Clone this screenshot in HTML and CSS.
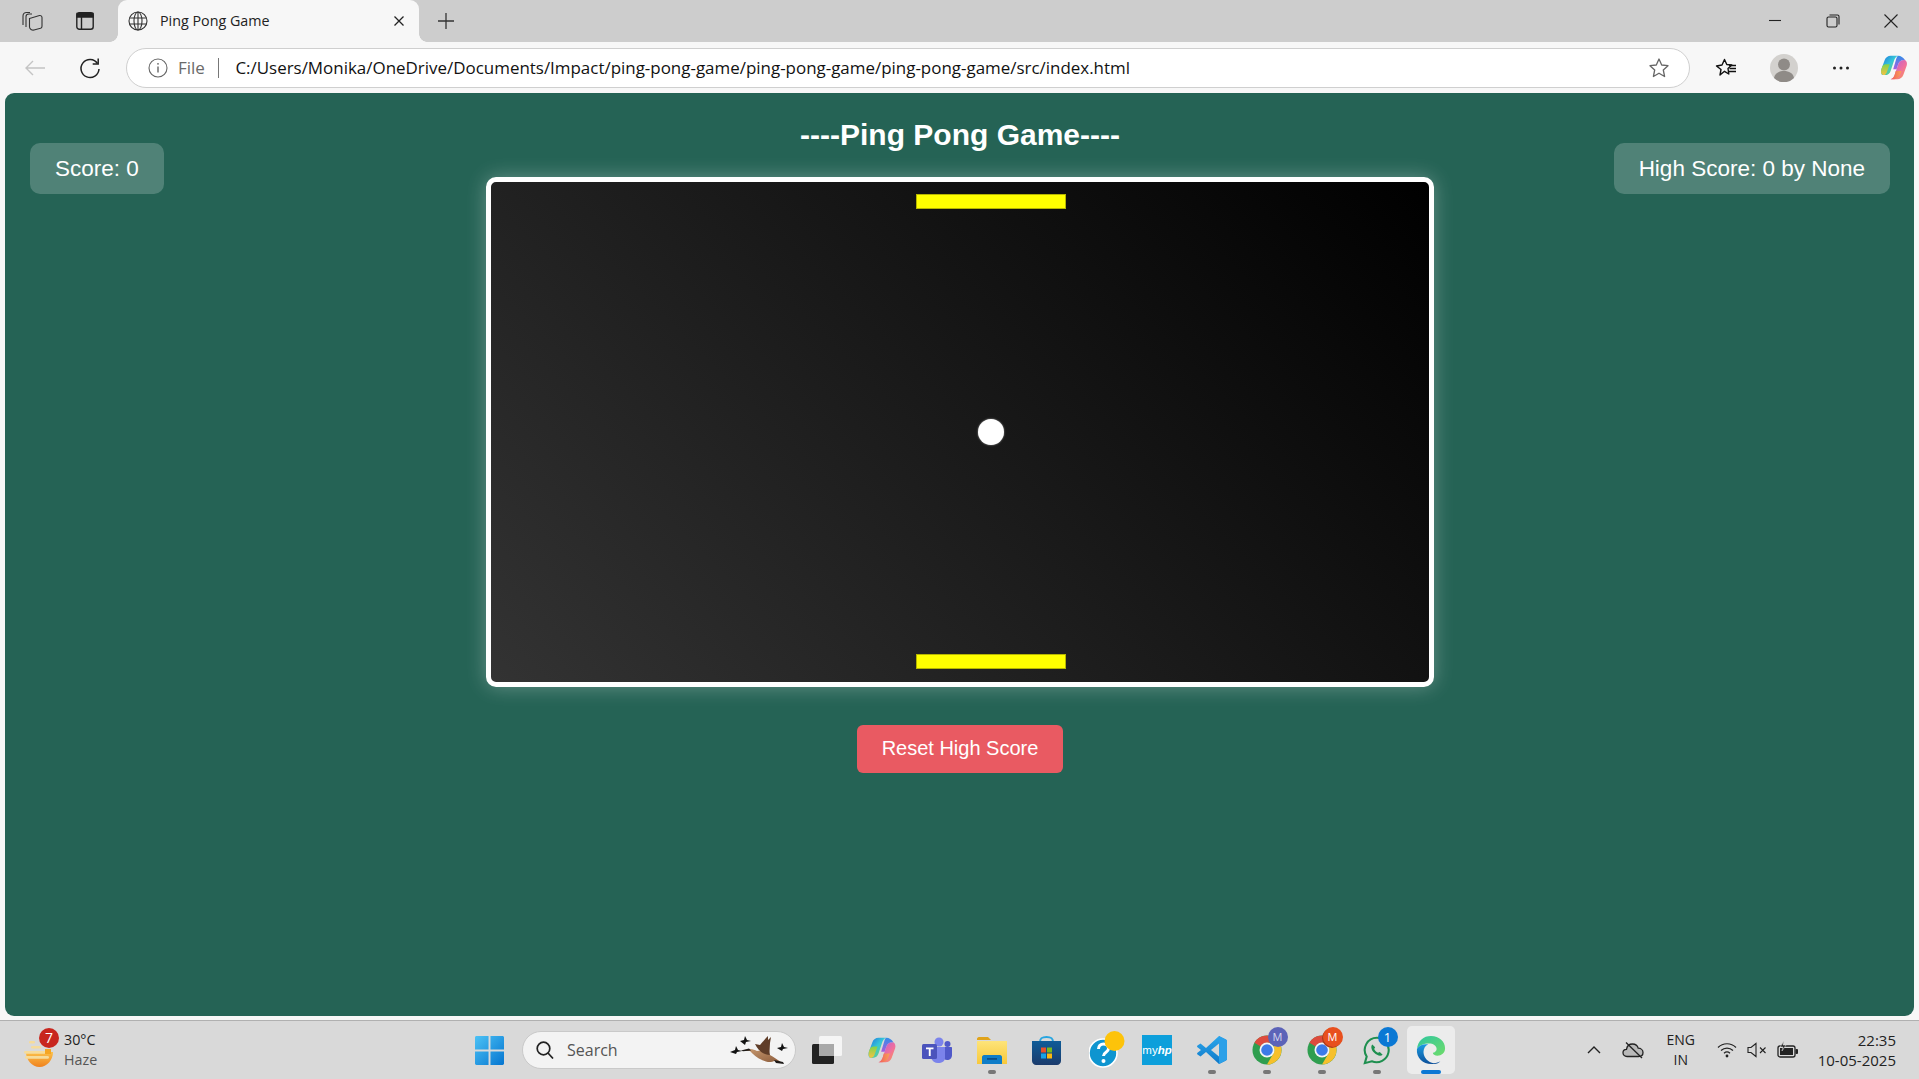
FILE: index.html
```html
<!DOCTYPE html>
<html lang="en">
<head>
<meta charset="utf-8">
<title>Ping Pong Game</title>
<link rel="stylesheet" href="styles.css">
</head>
<body>
<svg class="defs" width="0" height="0" aria-hidden="true">
  <defs>
    <linearGradient id="cpA" x1="0" y1="0" x2="1" y2="1"><stop offset="0" stop-color="#1b6ee0"/><stop offset=".45" stop-color="#35c6d8"/><stop offset="1" stop-color="#8bd63f"/></linearGradient>
    <linearGradient id="cpB" x1="0" y1="0" x2="1" y2="1"><stop offset="0" stop-color="#b25ae0"/><stop offset=".6" stop-color="#f2719a"/><stop offset="1" stop-color="#f9a03f"/></linearGradient>
    <linearGradient id="cpC" x1="0" y1="0" x2="0" y2="1"><stop offset="0" stop-color="#7fd34a"/><stop offset="1" stop-color="#f6c343"/></linearGradient>
    <linearGradient id="cpD" x1="0" y1="0" x2="1" y2="0"><stop offset="0" stop-color="#f05a5a"/><stop offset="1" stop-color="#f9a25a"/></linearGradient>
    <linearGradient id="cpE" x1="0" y1="0" x2="0" y2="1"><stop offset="0" stop-color="#2f8fe8"/><stop offset="1" stop-color="#a85ce0"/></linearGradient>
    <linearGradient id="winG" x1="0" y1="0" x2="1" y2="1"><stop offset="0" stop-color="#4cc2f5"/><stop offset="1" stop-color="#0575d0"/></linearGradient>
    <linearGradient id="edgeA" x1="0" y1="0" x2="1" y2="1"><stop offset="0" stop-color="#2fc6a0"/><stop offset="1" stop-color="#6fdc6a"/></linearGradient>
    <linearGradient id="edgeB" x1="0" y1="0" x2="0" y2="1"><stop offset="0" stop-color="#1b9de2"/><stop offset="1" stop-color="#0c4f9a"/></linearGradient>
    <linearGradient id="sunG" x1="0" y1="0" x2="0" y2="1"><stop offset="0" stop-color="#fbc14a"/><stop offset="1" stop-color="#f0821e"/></linearGradient>
    <linearGradient id="folderG" x1="0" y1="0" x2="0" y2="1"><stop offset="0" stop-color="#fde47a"/><stop offset="1" stop-color="#f8c83a"/></linearGradient>
    <linearGradient id="bagG" x1="0" y1="0" x2="0" y2="1"><stop offset="0" stop-color="#0f5c98"/><stop offset="1" stop-color="#1b3b6c"/></linearGradient>
    <linearGradient id="vsG" x1="0" y1="0" x2="0" y2="1"><stop offset="0" stop-color="#2ca7ec"/><stop offset="1" stop-color="#0e78c8"/></linearGradient>
    <linearGradient id="gooseG" x1="0" y1="0" x2="1" y2="1"><stop offset="0" stop-color="#c89a70"/><stop offset="1" stop-color="#8a5a3a"/></linearGradient>
    <symbol id="copilot" viewBox="0 0 32 32">
      <path d="M12 2h9c-3 1-4 3-5 6l-4 12c-1 3-3 5-7 5H3C1 25 0 22 1 18L5 7c1-3 4-5 7-5z" fill="url(#cpA)"/>
      <path d="M3 25c-2-1-3-3-2-7l1-3c1-2 2-3 4-3h5l-3 8c-1 3-2 5-5 5z" fill="url(#cpC)"/>
      <path d="M20 30h-8c3-1 4-3 5-6l4-12c1-3 3-5 7-5h1c2 1 3 4 2 7l-4 11c-1 3-4 5-7 5z" fill="url(#cpB)"/>
      <path d="M12 30c3-1 4-3 5-6l1-4h7l-2 5c-1 3-4 5-7 5z" fill="url(#cpD)"/>
      <path d="M21 2c3 0 6 2 8 5h-1c-4 0-6 2-7 5l-2 6h-4l3-10c1-3 1-5 3-6z" fill="url(#cpE)"/>
    </symbol>
    <symbol id="chrome" viewBox="0 0 32 32">
      <circle cx="16" cy="16" r="15.500" fill="#2f9e4f"/>
      <path d="M16 .5a15.500 15.500 0 0 1 13.400 7.750H16a7.750 7.750 0 0 0-6.700 3.900L2.600 8.250A15.500 15.500 0 0 1 16 .5z" fill="#dd4b3d"/>
      <path d="M29.400 8.250A15.500 15.500 0 0 1 16 31.500l6.700-11.600A7.750 7.750 0 0 0 22.700 12z" fill="#f6c02c"/>
      <circle cx="16" cy="16" r="8" fill="#f5f5f5"/>
      <circle cx="16" cy="16" r="6.200" fill="#3c7be8"/>
    </symbol>
  </defs>
</svg>

<div class="tabstrip">
  <div class="strip-left">
    <svg width="21" height="20" viewBox="0 0 21 20" fill="none" stroke="#333" stroke-width="1.100"><path d="M1 14V5C1 3 2.500 1.500 4.500 1.500H8"/><path d="M4 16V5.500C4 4 5.500 3 7 3h3"/><path d="M7.500 7.500l10-3c1.200-.3 2.500.6 2.500 1.900v8.800c0 1-.6 1.800-1.500 2.100L12 19c-2 .5-4.500-1-4.500-3z"/></svg>
    <svg width="18" height="18" viewBox="0 0 18 18" fill="none" stroke="#222" stroke-width="1.400"><rect x=".8" y=".8" width="16.400" height="16.400" rx="2.500"/><path d="M1 1.500h16V5H1z" fill="#222"/><path d="M5.500 5v12"/></svg>
  </div>
  <div class="tab">
    <svg class="tab-globe" width="20" height="20" viewBox="0 0 20 20" fill="none" stroke="#333" stroke-width="1.100"><circle cx="10" cy="10" r="9"/><ellipse cx="10" cy="10" rx="4" ry="9"/><path d="M1.800 7h16.400M1.800 13h16.400M10 1v18"/></svg>
    <span class="tab-title">Ping Pong Game</span>
    <svg class="tab-close" width="12" height="12" viewBox="0 0 12 12" stroke="#222" stroke-width="1.300"><path d="M1.500 1.500l9 9M10.500 1.500l-9 9"/></svg>
  </div>
  <svg class="new-tab" width="18" height="18" viewBox="0 0 18 18" stroke="#333" stroke-width="1.300"><path d="M9 1v16M1 9h16"/></svg>
  <div class="win-controls">
    <svg width="14" height="14" viewBox="0 0 14 14" stroke="#222" stroke-width="1.100"><path d="M1 6.500h12"/></svg>
    <svg width="14" height="14" viewBox="0 0 14 14" fill="none" stroke="#222" stroke-width="1.100"><rect x="1" y="3" width="10" height="10" rx="1.500"/><path d="M3.500 1h8c.9 0 1.500.6 1.500 1.500v8"/></svg>
    <svg width="14" height="14" viewBox="0 0 14 14" stroke="#222" stroke-width="1.100"><path d="M.5.500l13 13M13.500.500l-13 13"/></svg>
  </div>
</div>

<div class="toolbar">
  <svg class="tb-back" width="22" height="16" viewBox="0 0 22 16" fill="none" stroke="#c4c4c4" stroke-width="1.400"><path d="M21 8H2M9 1L2 8l7 7"/></svg>
  <svg class="tb-reload" width="22" height="24" viewBox="0 0 22 24" fill="none" stroke="#222" stroke-width="1.500"><path d="M18.500 7.500A9 9 0 1 0 20 13"/><path d="M19.200 2.500v5.500h-5.500"/></svg>
  <div class="addressbar">
    <svg width="20" height="20" viewBox="0 0 20 20" fill="none" stroke="#666" stroke-width="1.100"><circle cx="10" cy="10" r="9"/><path d="M10 8.500v6" stroke-width="1.400"/><circle cx="10" cy="5.800" r=".9" fill="#666" stroke="none"/></svg>
    <span class="addr-file">File</span>
    <span class="addr-sep"></span>
    <span class="addr-url">C:/Users/Monika/OneDrive/Documents/Impact/ping-pong-game/ping-pong-game/ping-pong-game/src/index.html</span>
    <svg class="addr-star" width="22" height="22" viewBox="0 0 22 22" fill="none" stroke="#666" stroke-width="1.300"><path d="M11 2l2.700 6 6.300.7-4.700 4.300 1.300 6.500L11 16.200 5.400 19.500l1.300-6.500L2 8.700 8.300 8z" stroke-linejoin="round"/></svg>
  </div>
  <svg class="tb-favs" width="22" height="20" viewBox="0 0 22 20" fill="none" stroke="#111" stroke-width="1.400"><path d="M9.500 1.500l2.300 5 5 .5-3.800 3.500.8 5.500-4.300-2.700L5 17l1-5.500L1.500 8l5.500-1z" stroke-linejoin="round"/><path d="M14 7.500h7M14.500 10.500h6.500M13.500 13.500h7.500"/></svg>
  <svg class="tb-avatar" width="28" height="28" viewBox="0 0 28 28"><circle cx="14" cy="14" r="14" fill="#d3d1ce"/><circle cx="14" cy="10.500" r="6" fill="#8f8b87"/><path d="M4 24c1-5 5-7 10-7s9 2 10 7a14 14 0 0 1-20 0z" fill="#8f8b87"/></svg>
  <svg class="tb-more" width="18" height="6" viewBox="0 0 18 6" fill="#222"><circle cx="2.500" cy="3" r="1.500"/><circle cx="9" cy="3" r="1.500"/><circle cx="15.500" cy="3" r="1.500"/></svg>
  <svg class="tb-copilot" width="28" height="27"><use href="#copilot"/></svg>
</div>

<main class="viewport">
  <div class="score-slot"><div class="score-box">Score: 0</div></div>
  <div class="game">
    <h1 class="game-title">----Ping Pong Game----</h1>
    <div class="board">
      <div class="paddle paddle-top"></div>
      <div class="ball"></div>
      <div class="paddle paddle-bottom"></div>
    </div>
    <button class="reset-btn" type="button">Reset High Score</button>
  </div>
  <div class="score-slot score-slot-right"><div class="score-box">High Score: 0 by None</div></div>
</main>

<footer class="taskbar">
  <div class="weather">
    <span class="weather-icon">
      <svg width="30" height="26" viewBox="0 0 30 26"><path d="M2 11h27c0 8-6 15-13.500 15S2 19 2 11z" fill="url(#sunG)"/><rect x="5" y="0" width="6" height="2.600" rx="1.300" fill="#f6dc9a"/><rect x="7" y="5" width="10" height="2.600" rx="1.300" fill="#f6dc9a"/><rect x="0" y="10" width="25" height="2.800" rx="1.400" fill="#f6dc9a"/><rect x="1" y="15" width="24" height="2.800" rx="1.400" fill="#f6dc9a"/><rect x="21" y="8" width="6" height="5" fill="#f5a623"/></svg>
      <span class="weather-badge">7</span>
    </span>
    <div class="weather-text"><span>30°C</span><span class="weather-sub">Haze</span></div>
  </div>
  <div class="task-center">
    <svg class="win-logo" width="29" height="29" viewBox="0 0 30 30"><path d="M0 1.500C0 .7.700 0 1.500 0H14v14H0zM16 0h12.500c.8 0 1.500.7 1.500 1.500V14H16zM0 16h14v14H1.500C.7 30 0 29.300 0 28.500zM16 16h14v12.500c0 .8-.7 1.500-1.500 1.500H16z" fill="url(#winG)"/></svg>
    <div class="searchbox">
      <svg width="18" height="18" viewBox="0 0 18 18" fill="none" stroke="#222" stroke-width="1.700"><circle cx="7.500" cy="7.500" r="6.300"/><path d="M12 12l5 5.500"/></svg>
      <span class="search-label">Search</span>
      <svg class="search-art" width="60" height="30" viewBox="0 0 60 30">
        <path d="M14 15l6-1c3 0 5 1 7 2 5-1 9 1 13 4 4 2 8 5 12 8l-8-2c-3 2-8 1-12-1-5-2-9-6-12-9l-6 0z" fill="url(#gooseG)"/>
        <path d="M25 9l5 1 6-7 2-2 0 4 3-3-1 6c0 4-1 8 0 12-7 0-12-5-15-11z" fill="#5f3d28"/>
        <path d="M11 15.500l8-2 2 2-8 .8z" fill="#1d1a18"/>
        <path d="M44 25l9 2 1 2-8-1z" fill="#1d1a18"/>
        <g fill="#111">
          <path d="M0 17l5-2 1-4 2 4 4 1-5 1-1 2z"/>
          <path d="M10 6l4-1 1-4 2 4 4 1-5 1-1 3z"/>
          <path d="M47 13l4-1 1-4 2 4 4 1-5 1-1 2z"/>
        </g>
      </svg>
    </div>
    <span class="task-icon">
      <svg width="30" height="28" viewBox="0 0 30 28"><rect x="0" y="8" width="22" height="20" rx="1.500" fill="#222"/><rect x="7" y="0" width="23" height="20" rx="1.500" fill="#f5f5f5"/><rect x="7" y="8" width="15" height="12" fill="#a9a9a9"/></svg>
    </span>
    <span class="task-icon"><svg width="30" height="28"><use href="#copilot"/></svg></span>
    <span class="task-icon">
      <svg width="30" height="26" viewBox="0 0 30 26"><circle cx="17" cy="5" r="4.500" fill="#7b83eb"/><circle cx="25.500" cy="7" r="3" fill="#5059c9"/><path d="M20 10h9c.6 0 1 .4 1 1v7c0 3-2 5-5 5-2 0-3-1-4-2z" fill="#5059c9"/><path d="M9 10h14v11c0 3-3 5-7 5-3 0-6-2-7-5z" fill="#7b83eb"/><rect x="0" y="7" width="15" height="15" rx="1.500" fill="#4b53bc"/><path d="M4 10.500h7.500v1.800H8.700v6.700H6.800v-6.700H4z" fill="#fff"/></svg>
    </span>
    <span class="task-icon task-open">
      <svg width="30" height="27" viewBox="0 0 30 27"><path d="M0 2c0-1 .7-2 2-2h9l3 3h-14z" fill="#e0a31a"/><path d="M0 4h30v23H0z" fill="url(#folderG)"/><path d="M5 20c0-1 1-2 2-2h16c1 0 2 1 2 2v7H5z" fill="#0f7dc8"/><rect x="10" y="21" width="10" height="1.800" fill="#0a4f8a"/></svg>
    </span>
    <span class="task-icon">
      <svg width="29" height="29" viewBox="0 0 29 29"><path d="M8 6c0-4 2-5 6.500-5S21 2 21 6" fill="none" stroke="#27a5e0" stroke-width="2"/><path d="M0 5h29v20c0 2-2 4-4 4H4c-2 0-4-2-4-4z" fill="url(#bagG)"/><rect x="9" y="11.500" width="5" height="5" fill="#e8512a"/><rect x="15" y="11.500" width="5" height="5" fill="#79b81e"/><rect x="9" y="17.500" width="5" height="5" fill="#16a2e8"/><rect x="15" y="17.500" width="5" height="5" fill="#fbb80f"/></svg>
    </span>
    <span class="task-icon task-help">
      <svg width="36" height="38" viewBox="0 0 36 38"><circle cx="14" cy="22" r="14" fill="#0e95d0" stroke="#fff" stroke-width="1.600"/><path d="M9.500 18c0-3 2-5 5-5s5 2 5 4.500c0 4-5 3.500-5 7.500" fill="none" stroke="#fff" stroke-width="3"/><circle cx="14.500" cy="30" r="2" fill="#fff"/><circle cx="25.500" cy="10" r="10" fill="#fdc30a"/></svg>
    </span>
    <span class="task-icon">
      <svg width="30" height="30" viewBox="0 0 30 30"><rect width="30" height="30" fill="#0d9fdb"/><text class="hp-text" x="15" y="19" text-anchor="middle">my<tspan class="hp-bold">hp</tspan></text></svg>
    </span>
    <span class="task-icon task-open">
      <svg width="30" height="30" viewBox="0 0 30 30"><path d="M22 1l7 3.500c.6.300 1 .9 1 1.500v18c0 .6-.4 1.200-1 1.500L22 29 9 17l-5.500 4.500L.5 19.500c-.6-.5-.6-1.300 0-1.800L4 15 .5 12.300c-.6-.5-.6-1.300 0-1.800l3-2L9 13z" fill="url(#vsG)"/><path d="M22 1l7 3.500c.6.300 1 .9 1 1.500v18c0 .6-.4 1.200-1 1.500L22 29z" fill="#2ca0e8"/><path d="M22 8.500v13L14 15z" fill="#d8d8d8"/></svg>
    </span>
    <span class="task-icon task-open">
      <span class="badged">
        <svg width="30" height="30"><use href="#chrome"/></svg>
        <span class="letter-badge badge-purple">M</span>
      </span>
    </span>
    <span class="task-icon task-open">
      <span class="badged">
        <svg width="30" height="30"><use href="#chrome"/></svg>
        <span class="letter-badge badge-orange">M</span>
      </span>
    </span>
    <span class="task-icon task-open">
      <span class="badged">
        <svg width="30" height="30" viewBox="0 0 30 32"><path d="M15 3a13 13 0 0 0-11 20L2 30l7.500-2A13 13 0 1 0 15 3z" fill="none" stroke="#1e8f4f" stroke-width="2.200"/><path d="M10 10c-2 2-1 6 2 9s7 4 9 2l-3-3-2 1c-2-1-3-2-4-4l1-2z" fill="#1e8f4f"/></svg>
        <span class="letter-badge badge-blue">1</span>
      </span>
    </span>
    <span class="task-icon task-active">
      <svg width="30" height="30" viewBox="0 0 32 32"><path d="M1 15C2 6 8 1 16 1c9 0 15 6 15 13 0 5-4 8-8 8-3 0-5-1-5-3 2 0 4-2 4-4 0-4-4-6-8-6-6 0-11 2-13 6z" fill="url(#edgeA)"/><path d="M1 15c2-4 7-6 12-5-3 1-5 4-5 8 0 6 5 11 11 12 3 0 5-1 7-2-3 3-6 3-10 3C8 31 0 25 1 15z" fill="url(#edgeB)"/></svg>
    </span>
  </div>
  <div class="tray">
    <svg class="tray-chevron" width="14" height="8" viewBox="0 0 14 8" fill="none" stroke="#222" stroke-width="1.400"><path d="M1 7l6-6 6 6"/></svg>
    <svg class="tray-cloud" width="22" height="18" viewBox="0 0 22 18" fill="none" stroke="#222" stroke-width="1.300"><path d="M5 15.500c-2.500 0-4-1.700-4-3.700S2.500 8.300 4.500 8.300C5 5 7.500 3 10.500 3c2.700 0 5 1.500 5.700 4.200 2.500 0 4.800 1.700 4.800 4.300s-2 4-4.500 4z" fill="#b9b9b9"/><path d="M4 1.500l16 15.500"/></svg>
    <div class="tray-lang"><span>ENG</span><span>IN</span></div>
    <svg class="tray-wifi" width="20" height="16" viewBox="0 0 20 16" fill="none" stroke="#222" stroke-width="1.200"><path d="M1 5.500c5-5 13-5 18 0M4 8.500c3.500-3.300 8.500-3.300 12 0M7 11.200c1.800-1.500 4.200-1.500 6 0"/><circle cx="10" cy="14" r="1.400" fill="#222" stroke="none"/></svg>
    <svg class="tray-sound" width="20" height="16" viewBox="0 0 20 16" fill="none" stroke="#222" stroke-width="1.100"><path d="M1 5.500h3L9 1.500v13l-5-4H1z"/><path d="M13 5.500l5.500 5.500M18.500 5.500L13 11"/></svg>
    <svg class="tray-battery" width="22" height="18" viewBox="0 0 22 18"><rect x="1" y="5" width="17" height="11" rx="2" fill="none" stroke="#222" stroke-width="1.300"/><rect x="3" y="7" width="13" height="7" fill="#222"/><rect x="18.500" y="8" width="2.500" height="5" rx="1" fill="#222"/><path d="M7 0L3 6h3l-1 4 4-6H6z" fill="#222" stroke="#d8d8d8" stroke-width=".6"/></svg>
    <div class="tray-clock"><span>22:35</span><span>10-05-2025</span></div>
  </div>
</footer>
</body>
</html>
```

FILE: styles.css
```css
* { box-sizing: border-box; }
html, body { margin: 0; height: 100%; overflow: hidden; }
body {
  width: 1919px;
  height: 1079px;
  background: #f7f7f7;
  font-family: "Liberation Sans", Arial, sans-serif;
  display: flex;
  flex-direction: column;
}
.defs { position: absolute; }

.tabstrip {
  height: 42px;
  flex: none;
  background: #cdcdcd;
  display: flex;
  align-items: center;
}
.strip-left { display: flex; align-items: center; width: 118px; padding-left: 22px; gap: 33px; }
.tab {
  position: relative;
  width: 301px;
  height: 42px;
  background: #f7f7f7;
  border-radius: 9px 9px 0 0;
  display: flex;
  align-items: center;
  padding: 0 14px 0 10px;
}
.tab::before,
.tab::after {
  content: "";
  position: absolute;
  bottom: 0;
  width: 8px;
  height: 8px;
}
.tab::before { left: -8px; background: radial-gradient(circle at 0 0, transparent 7.5px, #f7f7f7 8px); }
.tab::after { right: -8px; background: radial-gradient(circle at 100% 0, transparent 7.5px, #f7f7f7 8px); }
.tab-globe { flex: none; }
.tab-title { margin-left: 12px; padding-bottom: 1px; font: 14.300px "Open Sans", sans-serif; color: #222; flex: 1; }
.new-tab { margin-left: 18px; }
.win-controls { margin-left: auto; display: flex; gap: 44px; padding-right: 21px; }

.toolbar {
  height: 51px;
  flex: none;
  background: #f7f7f7;
  display: flex;
  align-items: center;
}
.tb-back { margin-left: 24px; }
.tb-reload { margin-left: 33px; }
.addressbar {
  margin-left: 25px;
  width: 1564px;
  height: 40px;
  background: #fff;
  border: 1px solid #cfcfcf;
  border-radius: 20px;
  display: flex;
  align-items: center;
  padding-left: 21px;
}
.addr-file { margin-left: 10px; font: 17px "Open Sans", sans-serif; color: #6a6a6a; }
.addr-sep { width: 1.500px; height: 20px; background: #777; margin-left: 13px; }
.addr-url { margin-left: 16px; font: 16.950px "Open Sans", sans-serif; color: #111; flex: 1; white-space: nowrap; }
.addr-star { margin-right: 19px; }
.tb-favs { margin-left: 25px; }
.tb-avatar { margin-left: 33px; }
.tb-more { margin-left: 34px; }
.tb-copilot { margin-left: 30px; }

.viewport {
  flex: none;
  margin: 0 5px;
  height: 923px;
  background: #256355;
  border-radius: 9px;
  display: grid;
  grid-template-columns: 1fr 948px 1fr;
  padding: 0 24px 0 25px;
  color: #fff;
}
.score-slot { padding-top: 50px; display: flex; align-items: flex-start; }
.score-slot-right { justify-content: flex-end; }
.score-box {
  background: rgba(255, 255, 255, .2);
  border-radius: 10px;
  padding: 13px 25px;
  font-size: 22.500px;
  line-height: 25px;
  white-space: nowrap;
}
.game { display: flex; flex-direction: column; align-items: center; }
.game-title {
  margin: 24px 0 0;
  font-size: 30px;
  line-height: 35px;
  font-weight: 700;
}
.board {
  position: relative;
  margin-top: 25px;
  width: 948px;
  height: 510px;
  border: 5px solid #fff;
  border-radius: 10px;
  background: linear-gradient(45deg, #333333, #000000);
  box-shadow: 0 0 20px rgba(255, 255, 255, .3);
}
.paddle {
  position: absolute;
  left: 425px;
  width: 150px;
  height: 15px;
  background: #ff0;
  border: 1px solid #b5b500;
}
.paddle-top { top: 12px; }
.paddle-bottom { bottom: 13px; }
.ball {
  position: absolute;
  left: 487px;
  top: 237px;
  width: 26px;
  height: 26px;
  border-radius: 50%;
  background: #fff;
  box-shadow: 0 0 2px rgba(255, 255, 255, .6);
}
.reset-btn {
  margin-top: 38px;
  width: 206px;
  height: 48px;
  border: 0;
  border-radius: 6px;
  padding: 0 0 2px;
  background: #e95a62;
  color: #fff;
  font: 20px "Liberation Sans", Arial, sans-serif;
}

.taskbar {
  margin-top: 4px;
  flex: 1;
  background: #d9d9d9;
  border-top: 1px solid #b0b0b0;
  display: flex;
  align-items: center;
}
.weather { display: flex; align-items: center; width: 475px; padding-left: 24px; }
.weather-icon { position: relative; width: 30px; height: 40px; display: flex; align-items: flex-end; padding-bottom: 3px; }
.weather-badge {
  position: absolute;
  left: 15px;
  top: -2px;
  width: 20px;
  height: 20px;
  border-radius: 50%;
  background: #c8261e;
  color: #fff;
  font: 14px/20px "Open Sans", sans-serif;
  text-align: center;
}
.weather-text { display: flex; flex-direction: column; margin-left: 10px; padding-bottom: 1px; font: 14.300px/20px "Open Sans", sans-serif; color: #222; }
.weather-sub { color: #555; }
.task-center { display: flex; align-items: center; }
.win-logo { margin-right: 18px; }
.searchbox {
  width: 274px;
  height: 38px;
  margin-right: 3px;
  background: #f3f3f3;
  border: 1px solid #c9c9c9;
  border-radius: 19px;
  display: flex;
  align-items: center;
  padding: 0 0 0 13px;
}
.search-label { margin-left: 13px; font: 16px "Open Sans", sans-serif; color: #555; flex: 1; }
.search-art { margin-right: 5px; }
.task-icon {
  width: 55px;
  height: 50px;
  display: flex;
  align-items: center;
  justify-content: center;
  position: relative;
  flex: none;
}
.task-open::after {
  content: "";
  position: absolute;
  bottom: 1px;
  left: 24px;
  width: 8px;
  height: 4px;
  border-radius: 2px;
  background: #777;
}
.task-help { padding-left: 10px; }
.task-active {
  background: #ececec;
  border-radius: 5px;
  width: 48px;
  height: 48px;
  margin-left: 3px;
}
.task-active::after {
  content: "";
  position: absolute;
  bottom: 0;
  left: 14px;
  width: 20px;
  height: 4px;
  border-radius: 2px;
  background: #0a78d4;
}
.hp-text { font: 11.500px "Liberation Sans", sans-serif; fill: #fff; }
.hp-bold { font-style: italic; font-weight: 700; }
.badged { position: relative; display: flex; }
.letter-badge {
  position: absolute;
  right: -6px;
  top: -8px;
  width: 20px;
  height: 20px;
  border-radius: 50%;
  color: #fff;
  font: 11px/20px "Open Sans", sans-serif;
  text-align: center;
}
.badge-purple { background: #5c63b8; color: #d8d8ee; }
.badge-orange { background: #e8501e; box-shadow: -1px 1px 0 #a83c1c; }
.badge-blue { background: #0a78d4; font-size: 13px; }
.tray { margin-left: auto; display: flex; align-items: center; padding-right: 23px; color: #222; }
.tray-cloud { margin-left: 21px; }
.tray-lang { display: flex; flex-direction: column; align-items: center; width: 28px; margin: 0 22px 0 23px; font: 14px/20px "Open Sans", sans-serif; }
.tray-sound { margin-left: 10px; }
.tray-battery { margin-left: 10px; }
.tray-clock { display: flex; flex-direction: column; align-items: flex-end; margin-left: 19px; font: 15px/20px "Open Sans", sans-serif; }
```
